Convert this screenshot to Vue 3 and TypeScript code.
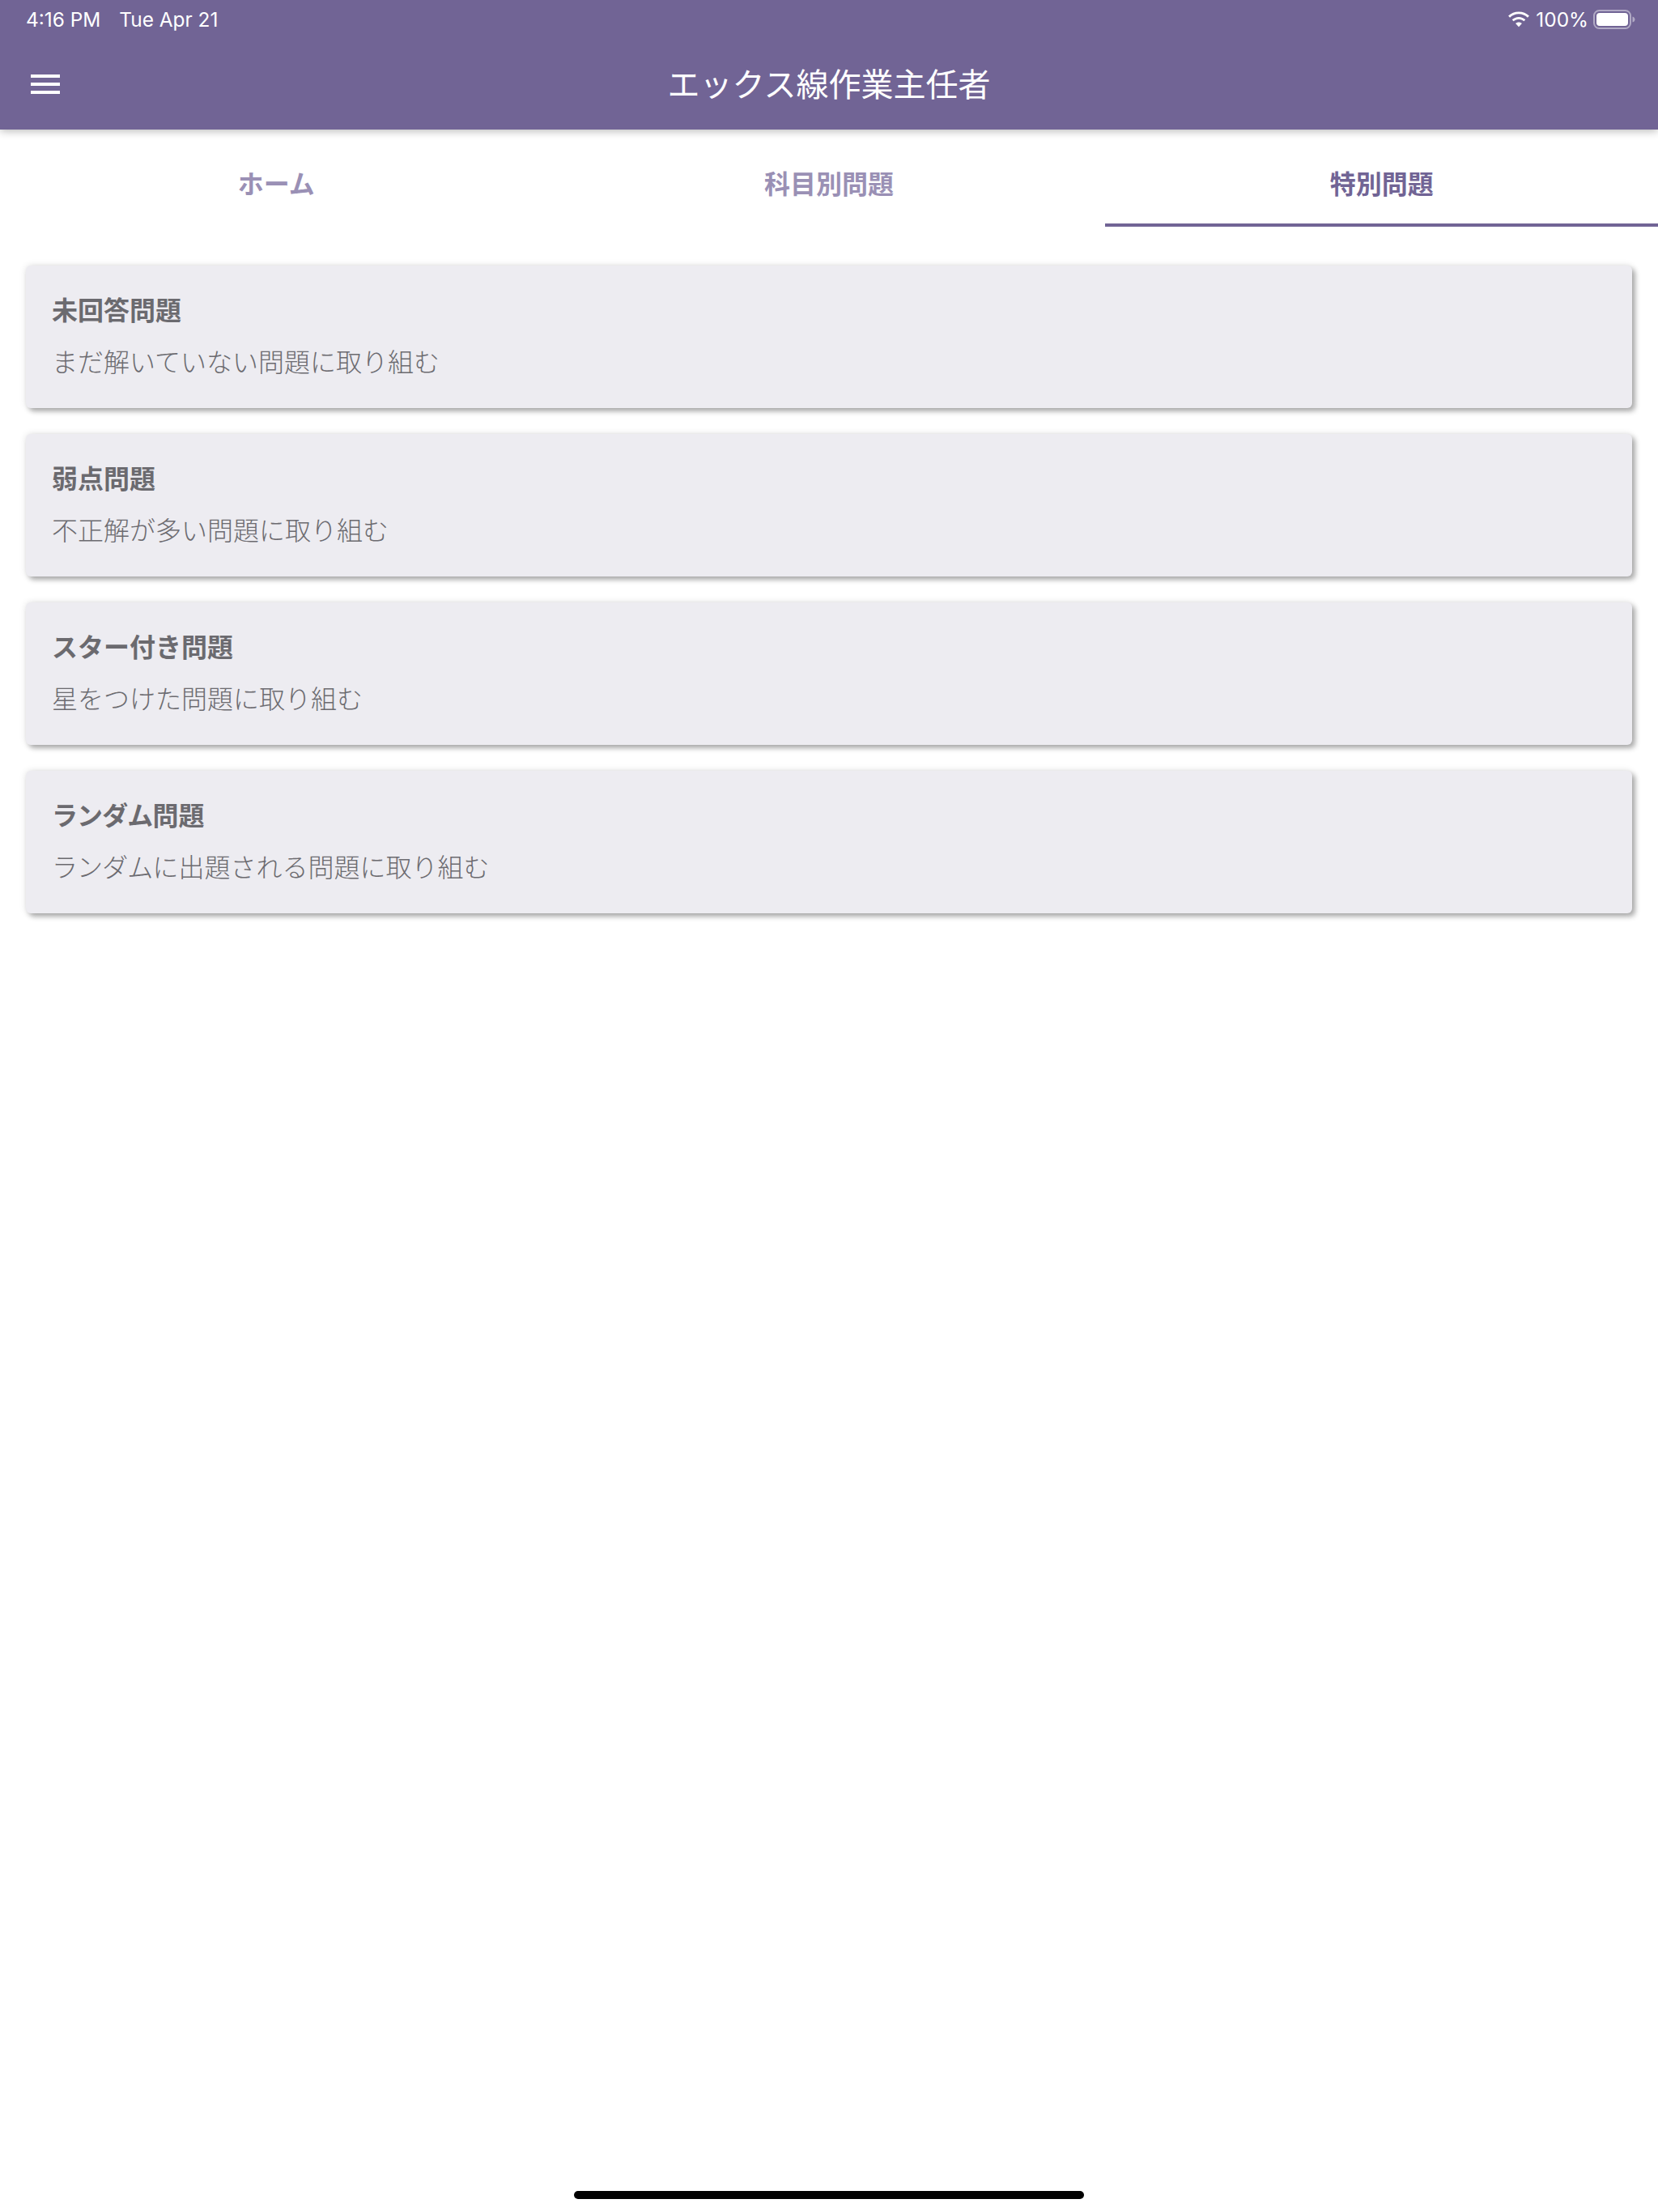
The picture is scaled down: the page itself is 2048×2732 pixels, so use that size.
<script setup lang="ts">
const tabs = ['ホーム', '科目別問題', '特別問題']
const cards = [
  { lead: '', title: '未回答問題', subLead: '', sub: 'まだ解いていない問題に取り組む' },
  { lead: '', title: '弱点問題', subLead: '', sub: '不正解が多い問題に取り組む' },
  { lead: '', title: 'スター付き問題', subLead: '', sub: '星をつけた問題に取り組む' },
  { lead: 'ランダム', title: '問題', subLead: 'ランダム', sub: 'に出題される問題に取り組む' },
]
</script>

<template>
  <div class="page">
    <header class="header">
      <div class="status">
        <div class="status-left"><span>4:16 PM</span><span>Tue Apr 21</span></div>
        <div class="status-right">
          <svg class="wifi" viewBox="0 0 28 20" width="30" height="21">
            <path fill="#fff" d="M14 3.200c4 0 7.700 1.600 10.400 4.100l1.900-2C23.100 2.200 18.800.4 14 .4S4.900 2.200 1.700 5.300l1.900 2C6.300 4.800 10 3.200 14 3.200zM14 9.400c2.300 0 4.400.9 6 2.300l1.900-2C19.800 7.800 17 6.600 14 6.600s-5.800 1.200-7.900 3.100l1.900 2c1.600-1.400 3.700-2.300 6-2.300zM14 12.900c-1.400 0-2.700.5-3.700 1.400L14 18.400l3.700-4.100c-1-.9-2.300-1.400-3.700-1.400z"/>
          </svg>
          <span>100%</span>
          <svg class="battery" viewBox="0 0 52 26" width="52" height="26">
            <rect x="1" y="2" width="45" height="22" rx="6.500" fill="none" stroke="#fff" stroke-opacity=".45" stroke-width="2"/>
            <rect x="4" y="5" width="39" height="16" rx="4" fill="#fff"/>
            <path d="M48.500 9.500c2 .5 3 2 3 3.500s-1 3-3 3.500z" fill="#fff" fill-opacity=".45"/>
          </svg>
        </div>
      </div>
      <div class="toolbar">
        <svg class="menu" viewBox="0 0 36 24" width="36" height="24">
          <rect x="0" y="0" width="36" height="4" fill="#fff"/>
          <rect x="0" y="10" width="36" height="4" fill="#fff"/>
          <rect x="0" y="20" width="36" height="4" fill="#fff"/>
        </svg>
        <h1>エックス線作業主任者</h1>
      </div>
    </header>

    <nav class="tabs">
      <div v-for="(t, i) in tabs" :key="t" class="tab" :class="{ active: i === 2 }">{{ t }}</div>
    </nav>

    <main class="list">
      <section v-for="c in cards" :key="c.title + c.sub" class="card">
        <div class="card-title"><span class="kana">{{ c.lead }}</span>{{ c.title }}</div>
        <div class="card-sub"><span class="kana">{{ c.subLead }}</span>{{ c.sub }}</div>
      </section>
    </main>

    <div class="home-bar"></div>
  </div>
</template>

<style scoped>
.page {
  position: relative;
  width: 2048px;
  height: 2732px;
  background: #fff;
  overflow: hidden;
  font-family: "Noto Sans CJK JP", "Liberation Sans", sans-serif;
}
.header {
  height: 160px;
  background: #716495;
  box-shadow: 0 2px 10px rgba(0, 0, 0, 0.28);
  color: #fff;
  position: relative;
  z-index: 1;
}
.status {
  height: 48px;
  padding: 0 28px 0 32px;
  display: flex;
  justify-content: space-between;
  align-items: center;
  font-family: Inter, "Liberation Sans", sans-serif;
  font-size: 24.4px;
}
.status-left {
  display: flex;
  gap: 23px;
}
.status-right {
  display: flex;
  align-items: center;
  gap: 6px;
}
.toolbar {
  position: relative;
  height: 112px;
  display: flex;
  align-items: center;
  justify-content: center;
}
.menu {
  position: absolute;
  left: 38px;
  top: 44px;
}
.toolbar h1 {
  margin: 0;
  font-size: 40px;
  font-weight: 400;
  line-height: 1;
  position: relative;
  top: -2px;
}
.tabs {
  display: flex;
  height: 120px;
}
.tab {
  flex: 1;
  display: flex;
  align-items: center;
  justify-content: center;
  font-size: 32px;
  font-weight: 700;
  color: #9a90b5;
  box-sizing: border-box;
  padding-top: 14px;
  border-bottom: 4px solid transparent;
}
.tab.active {
  color: #716495;
  border-bottom-color: #716495;
}
.list {
  padding: 48px 32px 0;
  display: flex;
  flex-direction: column;
  gap: 32px;
}
.card {
  height: 176px;
  box-sizing: border-box;
  padding: 29px 32px 0;
  background: #edecf1;
  border-radius: 6px;
  box-shadow: 4px 4px 6px rgba(0, 0, 0, 0.3), 0 0 9px rgba(0, 0, 0, 0.12);
}
.card-title {
  font-size: 32px;
  font-weight: 700;
  line-height: 48px;
  color: #6b6a6f;
}
.card-sub {
  margin-top: 16px;
  font-size: 32px;
  font-weight: 300;
  line-height: 48px;
  color: #6c6b70;
}
.kana {
  letter-spacing: -0.900px;
}
.home-bar {
  position: absolute;
  left: 709px;
  bottom: 16px;
  width: 630px;
  height: 10px;
  border-radius: 5px;
  background: #000;
}
</style>
